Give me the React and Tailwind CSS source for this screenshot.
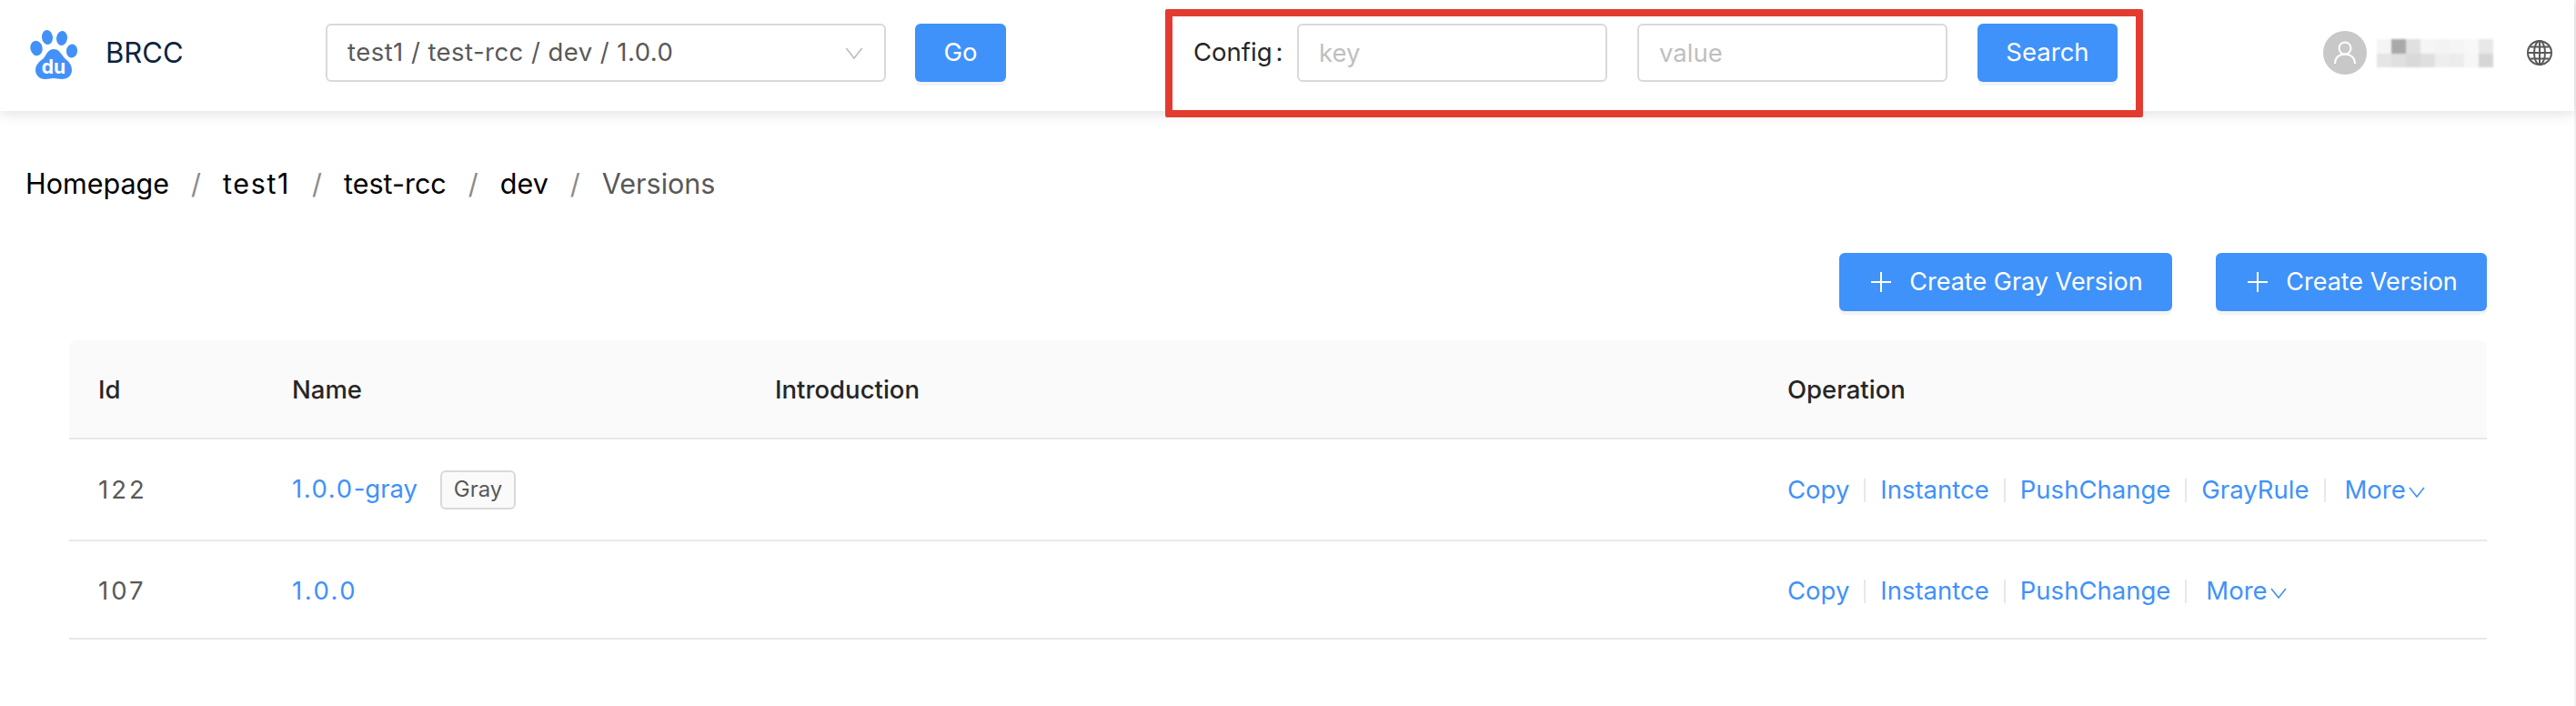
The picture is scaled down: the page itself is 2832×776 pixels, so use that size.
import React from "react";

const blurTop = ["bg-[#f5f5f5]", "bg-[#a9a9a9]", "bg-[#e0e0e0]", "bg-[#f5f5f5]", "bg-[#f3f3f3]", "bg-[#f5f5f5]", "bg-[#f8f8f8]", "bg-[#e8e8e8]"];
const blurBottom = ["bg-[#e5e5e5]", "bg-[#e0e0e0]", "bg-[#d9d9d9]", "bg-[#dfdfdf]", "bg-[#eeeeee]", "bg-[#ececec]", "bg-[#f6f6f6]", "bg-[#d6d6d6]"];

function Logo() {
  return (
    <svg width="52" height="54" viewBox="0 0 52 54" className="shrink-0 mt-1">
      <ellipse cx="7" cy="20" rx="6.6" ry="8.2" fill="#4391f8" transform="rotate(-12 7 20)" />
      <ellipse cx="19" cy="8" rx="6" ry="8" fill="#4391f8" transform="rotate(-6 19 8)" />
      <ellipse cx="35" cy="9" rx="6" ry="8" fill="#4391f8" transform="rotate(8 35 9)" />
      <ellipse cx="46" cy="23" rx="6" ry="7.6" fill="#4391f8" transform="rotate(6 46 23)" />
      <path d="M26 21c6 0 8 5 12 10 4 3 8 7 8 13 0 7-6 10-11 10-4 0-6-1-9-1s-5 1-10 1c-5 0-10-4-10-10 0-6 5-10 9-13 3-4 5-10 11-10z" fill="#4391f8" />
      <text x="26" y="48" textAnchor="middle" fill="#fff" fontFamily="Inter, sans-serif" fontWeight="700" fontSize="21">du</text>
    </svg>
  );
}

function Globe() {
  return (
    <svg width="28" height="28" viewBox="0 0 28 28" fill="none" stroke="#595959" strokeWidth="2">
      <circle cx="14" cy="14" r="13" />
      <ellipse cx="14" cy="14" rx="6" ry="13" />
      <path d="M14 1v26M1.500 14h25M3.500 7.500h21M3.500 20.500h21" />
    </svg>
  );
}

function UserIcon() {
  return (
    <svg width="24" height="26" viewBox="0 0 24 26" fill="none" stroke="#fff" strokeWidth="2">
      <circle cx="12" cy="8" r="6.500" />
      <path d="M1 25c0-6.500 4.500-10.500 11-10.500S23 18.500 23 25" />
    </svg>
  );
}

function Chevron({ className }) {
  return (
    <svg width="18" height="12" viewBox="0 0 18 12" fill="none" stroke="currentColor" strokeWidth="1.6" className={className}>
      <path d="M1 1l8 10 8-10" />
    </svg>
  );
}

function Plus() {
  return (
    <svg width="22" height="22" viewBox="0 0 22 22" stroke="#fff" strokeWidth="2" className="shrink-0">
      <path d="M11 0v22M0 11h22" />
    </svg>
  );
}

function PrimaryButton({ className, children }) {
  return (
    <button className={"h-16 flex items-center justify-center rounded-[6px] bg-[#3f92f9] text-white shadow-[0_4px_0_rgba(0,0,0,0.045)] " + className}>
      {children}
    </button>
  );
}

function Crumb({ label, last, className = "" }) {
  return (
    <>
      <span className={(last ? "text-[#595959] " : "text-black ") + className}>{label}</span>
      {!last && <span className="mx-[24px] text-[#8c8c8c]">/</span>}
    </>
  );
}

function Ops({ items }) {
  return (
    <div className="flex items-center text-[#3f92f9]">
      {items.map((item) => (
        <React.Fragment key={item}>
          <a>{item}</a>
          <span className="w-[2px] h-[26px] bg-[#e8e8e8] mx-[16px]"></span>
        </React.Fragment>
      ))}
      <a className="flex items-center ml-[5px]">
        More
        <Chevron className="ml-[3px] mt-[4px]" />
      </a>
    </div>
  );
}

export default function App() {
  return (
    <div className="min-h-screen bg-white border-r-2 border-[#f2f2f2] font-['Inter','Liberation_Sans',sans-serif] text-[27.5px]">
      {/* Top bar */}
      <header className="relative h-[122px] pb-[6px] flex items-center bg-white shadow-[0_3px_14px_rgba(0,0,0,0.12)]">
        <div className="w-[358px] pl-[33px] flex items-center">
          <Logo />
          <span className="ml-[31px] text-[31px] text-[#0c2340]">BRCC</span>
        </div>

        <div className="w-[616px] h-16 flex items-center justify-between pl-[22px] pr-[22px] border-2 border-[#d9d9d9] rounded-[6px] text-[#595959]">
          <span className="tracking-[0.45px]">test1 / test-rcc / dev / 1.0.0</span>
          <Chevron className="text-[#bfbfbf] w-[22px] h-[13px]" />
        </div>
        <PrimaryButton className="ml-[32px] w-[100px]">Go</PrimaryButton>

        {/* Config search */}
        <div className="ml-[206px] w-[114px] flex text-[#262626]">
          <span>Config</span>
          <span className="ml-[4px]">:</span>
        </div>
        <input placeholder="key" className="w-[341px] h-16 px-[22px] border-2 border-[#d9d9d9] rounded-[6px] placeholder:text-[#bfbfbf] outline-none" />
        <input placeholder="value" className="ml-[33px] w-[341px] h-16 px-[22px] border-2 border-[#d9d9d9] rounded-[6px] placeholder:text-[#bfbfbf] outline-none" />
        <PrimaryButton className="ml-[33px] w-[154px]">Search</PrimaryButton>

        {/* User */}
        <div className="ml-[226px] w-12 h-12 rounded-full bg-[#c8c8c8] flex items-center justify-center">
          <UserIcon />
        </div>
        <div className="ml-[11px] w-[128px] blur-[1px]">
          <div className="grid grid-cols-8 h-4">
            {blurTop.map((c, i) => <div key={i} className={c}></div>)}
          </div>
          <div className="grid grid-cols-8 h-[15px]">
            {blurBottom.map((c, i) => <div key={i} className={c}></div>)}
          </div>
        </div>
        <div className="ml-[37px] flex">
          <Globe />
        </div>

        {/* annotation box */}
        <div className="absolute left-[1281px] top-[10px] w-[1075px] h-[119px] border-8 border-[#e33b30] rounded-[2px]"></div>
      </header>

      {/* Breadcrumb */}
      <nav className="pl-[28px] pt-[59px] h-[156px] text-[30.5px] leading-[42px] flex items-start">
        <Crumb label="Homepage" />
        <Crumb label="test1" className="tracking-[1.6px]" />
        <Crumb label="test-rcc" />
        <Crumb label="dev" />
        <Crumb label="Versions" last />
      </nav>

      {/* Actions */}
      <div className="flex justify-end gap-12 pr-[96px] text-[27px]">
        <PrimaryButton className="w-[366px] gap-5 pl-[3px]">
          <Plus />
          Create Gray Version
        </PrimaryButton>
        <PrimaryButton className="w-[298px] gap-5 pl-[3px]">
          <Plus />
          Create Version
        </PrimaryButton>
      </div>

      {/* Table */}
      <div className="pl-[76px] pr-[96px] mt-8">
        <table className="w-[2658px] table-fixed border-collapse text-left">
          <colgroup>
            <col className="w-[213px]" />
            <col className="w-[531px]" />
            <col className="w-[1115px]" />
            <col className="w-[799px]" />
          </colgroup>
          <thead>
            <tr className="h-[108px] bg-[#fafafa] border-b-2 border-[#e8e8e8] text-[#262626]">
              <th className="pl-8 pt-[3px] font-medium rounded-tl-[8px]">Id</th>
              <th className="pl-8 pt-[3px] font-medium">Name</th>
              <th className="pl-8 pt-[3px] font-medium">Introduction</th>
              <th className="pl-[30px] pt-[3px] font-medium rounded-tr-[8px]">Operation</th>
            </tr>
          </thead>
          <tbody className="text-[#595959]">
            <tr className="h-[112px] border-b-2 border-[#e8e8e8]">
              <td className="pl-8 pt-[2px] tracking-[3px]">122</td>
              <td className="pl-8">
                <div className="flex items-center">
                  <a className="text-[#3f92f9]"><span className="tracking-[1.6px]">1.0.0</span>-gray</a>
                  <span className="ml-[25px] h-[43px] w-[83px] flex items-center justify-center border-2 border-[#d9d9d9] rounded-[6px] bg-[#fafafa] text-[24px]">Gray</span>
                </div>
              </td>
              <td className="pl-8"></td>
              <td className="pl-[30px] pt-[2px]">
                <Ops items={["Copy", "Instantce", "PushChange", "GrayRule"]} />
              </td>
            </tr>
            <tr className="h-[108px] border-b-2 border-[#e8e8e8]">
              <td className="pl-8 pt-[4px] tracking-[3px]">107</td>
              <td className="pl-8 pt-[4px]">
                <a className="text-[#3f92f9] tracking-[2.5px]">1.0.0</a>
              </td>
              <td className="pl-8"></td>
              <td className="pl-[30px] pt-[4px]">
                <Ops items={["Copy", "Instantce", "PushChange"]} />
              </td>
            </tr>
          </tbody>
        </table>
      </div>
    </div>
  );
}
